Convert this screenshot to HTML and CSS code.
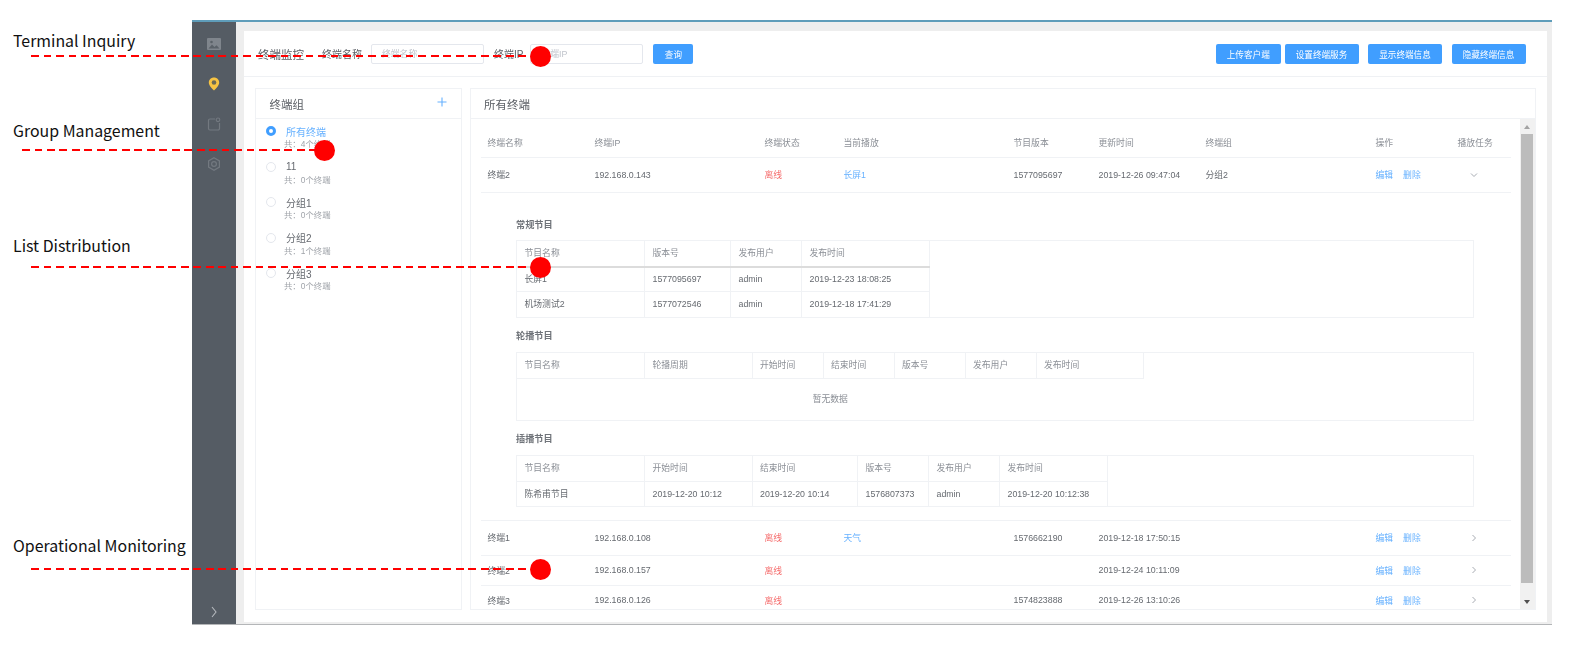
FILE: index.html
```html
<!DOCTYPE html>
<html lang="zh-CN">
<head>
    <meta charset="UTF-8">
    <title>终端监控</title>
    <link rel="stylesheet" href="styles.css">
</head>
<body>
    <div class="app">
        <div class="sidebar">
            <svg class="side-icon" viewBox="0 0 14 12"><rect width="14" height="12" rx="1" fill="#7f858c"/><circle cx="4.5" cy="4" r="1.3" fill="#5a6168"/><path d="M1.5 10.5l3.5-4 2.5 2.5 2-1.8 3 3.3z" fill="#5a6168"/></svg>
            <svg class="side-icon" viewBox="0 0 14 14"><path d="M7 .5c3 0 5.2 2.2 5.2 5 0 3.200-3.400 6.300-5.200 8-1.800-1.700-5.200-4.800-5.200-8 0-2.800 2.200-5 5.200-5z" fill="#f6c343"/><circle cx="7" cy="5.500" r="2.300" fill="#6b6a55"/></svg>
            <svg class="side-icon" viewBox="0 0 14 14"><path d="M8 2H3a1.500 1.500 0 0 0-1.500 1.500v8A1.500 1.500 0 0 0 3 13h8a1.500 1.500 0 0 0 1.500-1.500V6" fill="none" stroke="#737980" stroke-width="1.200"/><circle cx="11" cy="2.800" r="1.800" fill="none" stroke="#737980" stroke-width="1.100"/></svg>
            <svg class="side-icon" viewBox="0 0 14 14"><path d="M7 .8l5.400 3.100v6.200L7 13.200l-5.400-3.100V3.900z" fill="none" stroke="#737980" stroke-width="1.200"/><circle cx="7" cy="7" r="2.400" fill="none" stroke="#737980" stroke-width="1.200"/></svg>
            <svg class="side-toggle" viewBox="0 0 8 12"><path d="M2 1l4 5-4 5" fill="none" stroke="#b4b8bd" stroke-width="1.100"/></svg>
        </div>

        <div class="main">
            <div class="panel">
                <div class="toolbar">
                    <span class="page-title">终端监控</span>
                    <label class="field-label">终端名称</label>
                    <input class="field-input" placeholder="终端名称">
                    <label class="field-label field-label-ip">终端IP</label>
                    <input class="field-input field-input-ip" placeholder="终端IP">
                    <button class="btn btn-query">查询</button>
                    <div class="toolbar-actions">
                        <button class="btn btn-upload">上传客户端</button>
                        <button class="btn btn-wide">设置终端服务</button>
                        <button class="btn btn-wide btn-gap">显示终端信息</button>
                        <button class="btn btn-wide btn-gap">隐藏终端信息</button>
                    </div>
                </div>

                <div class="content">
                    <div class="card card-groups">
                        <div class="card-title">
                            <span>终端组</span>
                            <svg class="add-icon" viewBox="0 0 10 10"><path d="M5 .5v9M.5 5h9" stroke="#66b1ff" stroke-width="1.100"/></svg>
                        </div>
                        <div class="group-list">
                            <div class="group-item active">
                                <div class="group-name"><span class="radio"></span>所有终端</div>
                                <div class="group-count">共：4个终端</div>
                            </div>
                            <div class="group-item">
                                <div class="group-name"><span class="radio"></span>11</div>
                                <div class="group-count">共：0个终端</div>
                            </div>
                            <div class="group-item">
                                <div class="group-name"><span class="radio"></span>分组1</div>
                                <div class="group-count">共：0个终端</div>
                            </div>
                            <div class="group-item">
                                <div class="group-name"><span class="radio"></span>分组2</div>
                                <div class="group-count">共：1个终端</div>
                            </div>
                            <div class="group-item">
                                <div class="group-name"><span class="radio"></span>分组3</div>
                                <div class="group-count">共：0个终端</div>
                            </div>
                        </div>
                    </div>

                    <div class="card card-terminals">
                        <div class="card-title"><span>所有终端</span></div>
                        <div class="table-area">
                            <div class="table-scroll">
                                <table class="terminal-table">
                                    <colgroup>
                                        <col class="c-name"><col class="c-ip"><col class="c-status"><col class="c-play"><col class="c-ver">
                                        <col class="c-time"><col class="c-group"><col class="c-op"><col class="c-task">
                                    </colgroup>
                                    <thead>
                                        <tr>
                                            <th>终端名称</th><th>终端IP</th><th>终端状态</th><th>当前播放</th><th>节目版本</th>
                                            <th>更新时间</th><th>终端组</th><th>操作</th><th>播放任务</th>
                                        </tr>
                                    </thead>
                                    <tbody>
                                        <tr class="row-tall">
                                            <td>终端2</td><td>192.168.0.143</td><td class="offline">离线</td><td class="link">长屏1</td><td>1577095697</td>
                                            <td>2019-12-26 09:47:04</td><td>分组2</td>
                                            <td class="link"><span class="op">编辑</span>删除</td>
                                            <td><svg class="chevron" viewBox="0 0 10 10"><path d="M2 3.500l3 3 3-3" fill="none" stroke="#a8acb3"/></svg></td>
                                        </tr>
                                        <tr class="row-expand">
                                            <td colspan="9">
                                                <div class="section-title">常规节目</div>
                                                <div class="sub-box">
                                                    <table class="sub-table">
                                                        <colgroup><col class="s-127"><col class="s-86"><col class="s-71"><col class="s-128"></colgroup>
                                                        <thead><tr class="head-strong"><th>节目名称</th><th>版本号</th><th>发布用户</th><th>发布时间</th></tr></thead>
                                                        <tbody>
                                                            <tr><td>长屏1</td><td>1577095697</td><td>admin</td><td>2019-12-23 18:08:25</td></tr>
                                                            <tr class="last"><td>机场测试2</td><td>1577072546</td><td>admin</td><td>2019-12-18 17:41:29</td></tr>
                                                        </tbody>
                                                    </table>
                                                </div>

                                                <div class="section-title">轮播节目</div>
                                                <div class="sub-box">
                                                    <table class="sub-table">
                                                        <colgroup><col class="s-127"><col class="s-107"><col class="s-71"><col class="s-71"><col class="s-71"><col class="s-71"><col class="s-107"></colgroup>
                                                        <thead><tr><th>节目名称</th><th>轮播周期</th><th>开始时间</th><th>结束时间</th><th>版本号</th><th>发布用户</th><th>发布时间</th></tr></thead>
                                                        <tbody><tr class="last"><td class="empty" colspan="7">暂无数据</td></tr></tbody>
                                                    </table>
                                                </div>

                                                <div class="section-title">插播节目</div>
                                                <div class="sub-box">
                                                    <table class="sub-table">
                                                        <colgroup><col class="s-127"><col class="s-107"><col class="s-105"><col class="s-71"><col class="s-71"><col class="s-107"></colgroup>
                                                        <thead><tr><th>节目名称</th><th>开始时间</th><th>结束时间</th><th>版本号</th><th>发布用户</th><th>发布时间</th></tr></thead>
                                                        <tbody><tr class="last row-short"><td>陈希甫节目</td><td>2019-12-20 10:12</td><td>2019-12-20 10:14</td><td>1576807373</td><td>admin</td><td>2019-12-20 10:12:38</td></tr></tbody>
                                                    </table>
                                                </div>
                                            </td>
                                        </tr>
                                        <tr class="row-tall">
                                            <td>终端1</td><td>192.168.0.108</td><td class="offline">离线</td><td class="link">天气</td><td>1576662190</td>
                                            <td>2019-12-18 17:50:15</td><td></td>
                                            <td class="link"><span class="op">编辑</span>删除</td>
                                            <td><svg class="chevron" viewBox="0 0 10 10"><path d="M3.500 2l3 3-3 3" fill="none" stroke="#a8acb3"/></svg></td>
                                        </tr>
                                        <tr>
                                            <td>终端2</td><td>192.168.0.157</td><td class="offline">离线</td><td></td><td></td>
                                            <td>2019-12-24 10:11:09</td><td></td>
                                            <td class="link"><span class="op">编辑</span>删除</td>
                                            <td><svg class="chevron" viewBox="0 0 10 10"><path d="M3.500 2l3 3-3 3" fill="none" stroke="#a8acb3"/></svg></td>
                                        </tr>
                                        <tr>
                                            <td>终端3</td><td>192.168.0.126</td><td class="offline">离线</td><td></td><td>1574823888</td>
                                            <td>2019-12-26 13:10:26</td><td></td>
                                            <td class="link"><span class="op">编辑</span>删除</td>
                                            <td><svg class="chevron" viewBox="0 0 10 10"><path d="M3.500 2l3 3-3 3" fill="none" stroke="#a8acb3"/></svg></td>
                                        </tr>
                                    </tbody>
                                </table>
                            </div>
                            <div class="scrollbar">
                                <span class="scroll-btn scroll-up"></span>
                                <span class="scroll-thumb"></span>
                                <span class="scroll-btn scroll-down"></span>
                            </div>
                        </div>
                    </div>
                </div>
            </div>
        </div>
    </div>

    <div class="callout-label label-inquiry">Terminal Inquiry</div>
    <div class="callout-line line-inquiry"></div>
    <div class="callout-label label-group">Group Management</div>
    <div class="callout-line line-group"></div>
    <div class="callout-label label-list">List Distribution</div>
    <div class="callout-line line-list"></div>
    <div class="callout-label label-monitor">Operational Monitoring</div>
    <div class="callout-line line-monitor"></div>
</body>
</html>
```

FILE: styles.css
```css
body {
    margin: 0;
    background: #fff;
    font-family: "Liberation Sans", "Noto Sans CJK SC", sans-serif;
    font-size: 8.8px;
    color: #666a70;
    overflow: hidden;
}

/* screenshot of the app, slightly soft like the reference */
.app {
    display: flex;
    box-sizing: border-box;
    width: 1360px;
    height: 605px;
    margin: 20px 0 0 192px;
    border-top: 2px solid #5f9dba;
    border-bottom: 1px solid #b4b6b8;
    filter: blur(0.55px);
}

.sidebar {
    position: relative;
    display: flex;
    flex-direction: column;
    align-items: center;
    gap: 26px;
    width: 44px;
    padding-top: 15px;
    box-sizing: border-box;
    background: #555c64;
}

.side-icon {
    width: 14px;
    height: 14px;
}

.side-toggle {
    position: absolute;
    left: 18px;
    bottom: 6px;
    width: 8px;
    height: 12px;
}

.main {
    flex: 1;
    display: flex;
    padding: 9px 5px 2px 8px;
    background: #eeeeee;
    min-width: 0;
}

.panel {
    flex: 1;
    display: flex;
    flex-direction: column;
    background: #fff;
    min-width: 0;
}

.toolbar {
    display: flex;
    align-items: center;
    height: 46px;
    flex-shrink: 0;
    box-sizing: border-box;
    padding: 0 21.5px 0 14px;
    border-bottom: 1px solid #eff1f4;
}

.page-title {
    font-size: 11.5px;
    color: #5c6066;
    margin-right: 18px;
}

.field-label {
    font-size: 10px;
    color: #5c6066;
    margin-right: 9px;
}

.field-label-ip {
    margin-left: 10px;
    margin-right: 7px;
}

.field-input {
    width: 113px;
    height: 20px;
    box-sizing: border-box;
    padding: 0 10px;
    border: 1px solid #e4e7ed;
    border-radius: 2px;
    font-family: inherit;
    font-size: 8.8px;
    outline: none;
}

.field-input::placeholder {
    color: #c0c4cc;
}

.btn {
    height: 20px;
    box-sizing: border-box;
    padding: 0;
    border: 0;
    border-radius: 2px;
    background: #409eff;
    color: #fff;
    font-family: inherit;
    font-size: 8.6px;
}

.btn-query {
    width: 40px;
    margin-left: 10px;
}

.toolbar-actions {
    display: flex;
    margin-left: auto;
}

.btn-upload {
    width: 65.5px;
}

.btn-wide {
    width: 74px;
    margin-left: 3.5px;
}

.btn-gap {
    margin-left: 9.5px;
}

.content {
    flex: 1;
    display: flex;
    gap: 7.5px;
    padding: 11px 11px 12px;
    min-height: 0;
}

.card {
    display: flex;
    flex-direction: column;
    box-sizing: border-box;
    border: 1px solid #f0f2f5;
    min-height: 0;
}

.card-groups {
    width: 207px;
    flex-shrink: 0;
}

.card-terminals {
    flex: 1;
    min-width: 0;
}

.card-title {
    display: flex;
    justify-content: space-between;
    align-items: center;
    height: 30px;
    flex-shrink: 0;
    box-sizing: border-box;
    padding: 0 14px 0 13.5px;
    border-bottom: 1px solid #f0f2f5;
    font-size: 11.5px;
    color: #5c6066;
}

.add-icon {
    width: 10px;
    height: 10px;
    margin-top: -3px;
}

.group-list {
    padding: 6px 0 0 10px;
}

.group-item {
    height: 35.6px;
}

.group-name {
    display: flex;
    align-items: center;
    height: 12px;
    font-size: 10px;
    color: #666a70;
}

.group-item.active .group-name {
    color: #66b1ff;
}

.radio {
    width: 10px;
    height: 10px;
    box-sizing: border-box;
    margin-right: 10px;
    border: 1px solid #e4e7ed;
    border-radius: 50%;
    background: #fff;
}

.group-item.active .radio {
    border: 3px solid #409eff;
}

.group-count {
    margin: 1px 0 0 18px;
    line-height: 12px;
    font-size: 8.4px;
    color: #a0a4aa;
}

.table-area {
    flex: 1;
    display: flex;
    min-height: 0;
}

.table-scroll {
    flex: 1;
    overflow: hidden;
    padding: 10px 10px 0;
    min-width: 0;
}

.terminal-table {
    width: 1030px;
    table-layout: fixed;
    border-collapse: collapse;
}

.c-name { width: 107px; }
.c-ip { width: 170px; }
.c-status { width: 79px; }
.c-play { width: 170px; }
.c-ver { width: 85px; }
.c-time { width: 107px; }
.c-group { width: 170px; }
.c-op { width: 82px; }
.c-task { width: 60px; }

.terminal-table > thead th,
.terminal-table > tbody > tr > td {
    height: 30px;
    padding: 0 0 0 7px;
    box-sizing: border-box;
    border-bottom: 1px solid #f0f2f5;
    text-align: left;
    font-weight: normal;
    white-space: nowrap;
    overflow: hidden;
}

.terminal-table > thead th {
    height: 28px;
    color: #8b8f96;
}

.terminal-table > tbody > tr.row-tall > td {
    height: 35px;
}

.terminal-table > tbody > tr.row-expand > td {
    height: auto;
    padding: 24px 37px 13px 35.5px;
}

.offline {
    color: #f56c6c;
}

.link {
    color: #66b1ff;
}

.op {
    margin-right: 10px;
}

.chevron {
    display: block;
    width: 10px;
    height: 10px;
    margin-left: 11px;
}

.section-title {
    margin-top: 10px;
    height: 16px;
    line-height: 16px;
    font-size: 9.2px;
    font-weight: bold;
    color: #70747a;
}

.section-title:first-child {
    margin-top: 0;
}

.sub-box {
    margin-top: 8px;
    border: 1px solid #f0f2f5;
}

.section-title:first-child + .sub-box {
    margin-top: 7px;
}

.sub-table {
    display: block;
    table-layout: fixed;
    border-collapse: collapse;
}

.s-127 { width: 127.5px; }
.s-128 { width: 128px; }
.s-86 { width: 86px; }
.s-71 { width: 71px; }
.s-105 { width: 105.500px; }
.s-107 { width: 107.5px; }

.sub-table th,
.sub-table td {
    height: 25px;
    padding: 0 0 0 7.5px;
    box-sizing: border-box;
    border-right: 1px solid #f0f2f5;
    border-bottom: 1px solid #f0f2f5;
    text-align: left;
    font-weight: normal;
    line-height: 12px;
    white-space: nowrap;
}

.sub-table th {
    height: 26px;
    color: #8b8f96;
}

.head-strong th {
    border-bottom: 2px solid #dcdcdc;
}

.sub-table .last td {
    border-bottom: 0;
}

.sub-table .row-short td {
    height: 24px;
}

.sub-table td.empty {
    height: 41px;
    padding: 0;
    border-right: 0;
    text-align: center;
    color: #8b8f96;
}

.scrollbar {
    display: flex;
    flex-direction: column;
    width: 15px;
    flex-shrink: 0;
    background: #f1f1f1;
}

.scroll-btn {
    position: relative;
    height: 15px;
    flex-shrink: 0;
}

.scroll-btn::after {
    content: "";
    position: absolute;
    left: 4px;
    top: 6px;
    border-left: 3px solid transparent;
    border-right: 3px solid transparent;
}

.scroll-up::after {
    border-bottom: 4px solid #a3a3a3;
}

.scroll-down::after {
    border-top: 4px solid #505050;
}

.scroll-thumb {
    width: 12px;
    height: 449px;
    margin: 0 0 auto 1px;
    background: #bcbcbc;
}

/* annotations drawn over the screenshot */
.callout-label {
    position: absolute;
    left: 13px;
    font-family: "Noto Sans CJK SC", sans-serif;
    font-size: 15.9px;
    line-height: 20px;
    font-weight: 400;
    color: #111;
    white-space: nowrap;
}

.label-inquiry { top: 31px; }
.label-group { top: 121px; }
.label-list { top: 236px; }
.label-monitor { top: 536px; }

.callout-line {
    position: absolute;
    left: 31px;
    width: 509px;
    height: 2px;
    background: repeating-linear-gradient(90deg, #f00 0, #f00 7.5px, transparent 7.5px, transparent 12.5px);
}

.callout-line::after {
    content: "";
    position: absolute;
    right: -10.5px;
    top: -9.5px;
    width: 21px;
    height: 21px;
    border-radius: 50%;
    background: #f00;
}

.line-inquiry { top: 55px; }
.line-group { top: 149px; left: 22px; width: 302px; }
.line-list { top: 266px; }
.line-monitor { top: 568px; }
```
